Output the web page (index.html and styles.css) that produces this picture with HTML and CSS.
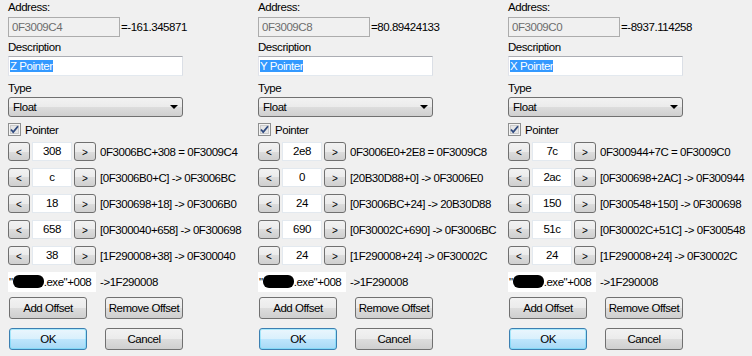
FILE: index.html
```html
<!DOCTYPE html>
<html lang="en">
<head>
  <meta charset="UTF-8" />
  <title>Pointer Editor</title>
  <link rel="stylesheet" href="styles.css">
</head>
<body>

  <div class="dialogs">

    <!-- Z pointer -->
    <div class="panel">
      <div class="label">Address:</div>
      <div class="field-row">
        <div class="addr-box">0F3009C4</div>
        <span class="addr-value">=-161.345871</span>
      </div>
      <div class="label label-desc">Description</div>
      <div class="text-box"><span class="selected">Z Pointer</span></div>
      <div class="label label-type">Type</div>
      <div class="select"><span>Float</span><span class="arrow"></span></div>
      <div class="check-row">
        <svg class="checkbox" width="13" height="13" viewBox="0 0 13 13"><rect x="0.5" y="0.5" width="12" height="12" fill="#f4f4f4" stroke="#8e8f8f"/><rect x="2.5" y="2.5" width="8" height="8" fill="#e6e6e6" stroke="#c9cacb"/><path d="M3 6.5 L5.2 9 L10 3.2" fill="none" stroke="#2f4a7f" stroke-width="1.8"/></svg>
        <span>Pointer</span>
      </div>
      <div class="offsets">
        <div class="offset-row"><button class="step">&lt;</button><div class="offset-input">308</div><button class="step">&gt;</button><span class="offset-text">0F3006BC+308 = 0F3009C4</span></div>
        <div class="offset-row"><button class="step">&lt;</button><div class="offset-input">c</div><button class="step">&gt;</button><span class="offset-text">[0F3006B0+C] -&gt; 0F3006BC</span></div>
        <div class="offset-row"><button class="step">&lt;</button><div class="offset-input">18</div><button class="step">&gt;</button><span class="offset-text">[0F300698+18] -&gt; 0F3006B0</span></div>
        <div class="offset-row"><button class="step">&lt;</button><div class="offset-input">658</div><button class="step">&gt;</button><span class="offset-text">[0F300040+658] -&gt; 0F300698</span></div>
        <div class="offset-row"><button class="step">&lt;</button><div class="offset-input">38</div><button class="step">&gt;</button><span class="offset-text">[1F290008+38] -&gt; 0F300040</span></div>
      </div>
      <div class="base-row">
        <div class="base-box">"<span class="redact"></span>.exe"+008</div>
        <span class="base-text">-&gt;1F290008</span>
      </div>
      <div class="btn-row">
        <button class="btn">Add Offset</button>
        <button class="btn">Remove Offset</button>
      </div>
      <div class="btn-row btn-row-last">
        <button class="btn btn-default">OK</button>
        <button class="btn">Cancel</button>
      </div>
    </div>

    <!-- Y pointer -->
    <div class="panel">
      <div class="label">Address:</div>
      <div class="field-row">
        <div class="addr-box">0F3009C8</div>
        <span class="addr-value">=80.89424133</span>
      </div>
      <div class="label label-desc">Description</div>
      <div class="text-box"><span class="selected">Y Pointer</span></div>
      <div class="label label-type">Type</div>
      <div class="select"><span>Float</span><span class="arrow"></span></div>
      <div class="check-row">
        <svg class="checkbox" width="13" height="13" viewBox="0 0 13 13"><rect x="0.5" y="0.5" width="12" height="12" fill="#f4f4f4" stroke="#8e8f8f"/><rect x="2.5" y="2.5" width="8" height="8" fill="#e6e6e6" stroke="#c9cacb"/><path d="M3 6.5 L5.2 9 L10 3.2" fill="none" stroke="#2f4a7f" stroke-width="1.8"/></svg>
        <span>Pointer</span>
      </div>
      <div class="offsets">
        <div class="offset-row"><button class="step">&lt;</button><div class="offset-input">2e8</div><button class="step">&gt;</button><span class="offset-text">0F3006E0+2E8 = 0F3009C8</span></div>
        <div class="offset-row"><button class="step">&lt;</button><div class="offset-input">0</div><button class="step">&gt;</button><span class="offset-text">[20B30D88+0] -&gt; 0F3006E0</span></div>
        <div class="offset-row"><button class="step">&lt;</button><div class="offset-input">24</div><button class="step">&gt;</button><span class="offset-text">[0F3006BC+24] -&gt; 20B30D88</span></div>
        <div class="offset-row"><button class="step">&lt;</button><div class="offset-input">690</div><button class="step">&gt;</button><span class="offset-text">[0F30002C+690] -&gt; 0F3006BC</span></div>
        <div class="offset-row"><button class="step">&lt;</button><div class="offset-input">24</div><button class="step">&gt;</button><span class="offset-text">[1F290008+24] -&gt; 0F30002C</span></div>
      </div>
      <div class="base-row">
        <div class="base-box">"<span class="redact"></span>.exe"+008</div>
        <span class="base-text">-&gt;1F290008</span>
      </div>
      <div class="btn-row">
        <button class="btn">Add Offset</button>
        <button class="btn">Remove Offset</button>
      </div>
      <div class="btn-row btn-row-last">
        <button class="btn btn-default">OK</button>
        <button class="btn">Cancel</button>
      </div>
    </div>

    <!-- X pointer -->
    <div class="panel">
      <div class="label">Address:</div>
      <div class="field-row">
        <div class="addr-box">0F3009C0</div>
        <span class="addr-value">=-8937.114258</span>
      </div>
      <div class="label label-desc">Description</div>
      <div class="text-box"><span class="selected">X Pointer</span></div>
      <div class="label label-type">Type</div>
      <div class="select"><span>Float</span><span class="arrow"></span></div>
      <div class="check-row">
        <svg class="checkbox" width="13" height="13" viewBox="0 0 13 13"><rect x="0.5" y="0.5" width="12" height="12" fill="#f4f4f4" stroke="#8e8f8f"/><rect x="2.5" y="2.5" width="8" height="8" fill="#e6e6e6" stroke="#c9cacb"/><path d="M3 6.5 L5.2 9 L10 3.2" fill="none" stroke="#2f4a7f" stroke-width="1.8"/></svg>
        <span>Pointer</span>
      </div>
      <div class="offsets">
        <div class="offset-row"><button class="step">&lt;</button><div class="offset-input">7c</div><button class="step">&gt;</button><span class="offset-text">0F300944+7C = 0F3009C0</span></div>
        <div class="offset-row"><button class="step">&lt;</button><div class="offset-input">2ac</div><button class="step">&gt;</button><span class="offset-text">[0F300698+2AC] -&gt; 0F300944</span></div>
        <div class="offset-row"><button class="step">&lt;</button><div class="offset-input">150</div><button class="step">&gt;</button><span class="offset-text">[0F300548+150] -&gt; 0F300698</span></div>
        <div class="offset-row"><button class="step">&lt;</button><div class="offset-input">51c</div><button class="step">&gt;</button><span class="offset-text">[0F30002C+51C] -&gt; 0F300548</span></div>
        <div class="offset-row"><button class="step">&lt;</button><div class="offset-input">24</div><button class="step">&gt;</button><span class="offset-text">[1F290008+24] -&gt; 0F30002C</span></div>
      </div>
      <div class="base-row">
        <div class="base-box">"<span class="redact"></span>.exe"+008</div>
        <span class="base-text">-&gt;1F290008</span>
      </div>
      <div class="btn-row">
        <button class="btn">Add Offset</button>
        <button class="btn">Remove Offset</button>
      </div>
      <div class="btn-row btn-row-last">
        <button class="btn btn-default">OK</button>
        <button class="btn">Cancel</button>
      </div>
    </div>

  </div>

</body>
</html>
```

FILE: styles.css
```css
body {
  margin: 0;
  background: #f0f0f0;
  font-family: "Liberation Sans", Arial, sans-serif;
  font-size: 11.5px;
  letter-spacing: -0.45px;
  color: #000;
}
.dialogs {
  display: flex;
}
.panel {
  width: 250px;
  padding-left: 8px;
  box-sizing: border-box;
  display: flex;
  flex-direction: column;
  align-items: flex-start;
}
.label {
  height: 15px;
  line-height: 15px;
}
.label-desc {
  margin-top: 3px;
}
.label-type {
  margin-top: 5px;
}
.field-row {
  display: flex;
  align-items: center;
  height: 20px;
  margin-top: 2px;
}
.addr-box {
  width: 112px;
  height: 20px;
  box-sizing: border-box;
  border: 1px solid #acacac;
  background: #f0f0f0;
  color: #6d6d6d;
  padding-left: 3px;
  line-height: 18px;
}
.addr-value {
  margin-left: 1px;
}
.text-box {
  margin-top: 1px;
  width: 175px;
  height: 20px;
  box-sizing: border-box;
  border: 1px solid;
  border-color: #abadb3 #dbdfe6 #e3e9ef #e2e3ea;
  background: #fff;
  padding-left: 1px;
  line-height: 18px;
}
.selected {
  background: #3399ff;
  color: #fff;
}
.select {
  margin-top: 1px;
  width: 175px;
  height: 20px;
  box-sizing: border-box;
  border: 1px solid #707070;
  border-radius: 3px;
  background: linear-gradient(#f2f2f2 0, #ebebeb 50%, #dddddd 50%, #cfcfcf 100%);
  display: flex;
  align-items: center;
  justify-content: space-between;
  padding: 0 4px 0 4px;
}
.arrow {
  width: 0;
  height: 0;
  border-left: 4px solid transparent;
  border-right: 4px solid transparent;
  border-top: 4px solid #000;
}
.check-row {
  margin-top: 6px;
  height: 13px;
  display: flex;
  align-items: center;
  gap: 4px;
}
.checkbox {
  display: block;
}
.offsets {
  margin-top: 6px;
  display: flex;
  flex-direction: column;
  gap: 7px;
}
.offset-row {
  display: flex;
  align-items: center;
  height: 19px;
}
.step {
  width: 22px;
  height: 19px;
  box-sizing: border-box;
  padding: 3px 0 0 0;
  border: 1px solid #707070;
  border-radius: 3px;
  background: linear-gradient(#f2f2f2 0, #ebebeb 50%, #dddddd 50%, #cfcfcf 100%);
  font-family: inherit;
  font-size: 10px;
  color: #000;
  line-height: 14px;
}
.offset-input {
  width: 40px;
  height: 19px;
  box-sizing: border-box;
  margin: 0 2px;
  border: 1px solid #e3e9ef;
  background: #fff;
  text-align: center;
  line-height: 16px;
}
.offset-text {
  margin-left: 4px;
  white-space: nowrap;
}
.base-row {
  margin-top: 7px;
  height: 20px;
  display: flex;
  align-items: center;
}
.base-box {
  width: 88px;
  height: 20px;
  box-sizing: border-box;
  background: #fff;
  padding-left: 1px;
  line-height: 20px;
  white-space: nowrap;
  overflow: hidden;
}
.redact {
  display: inline-block;
  width: 31px;
  height: 13px;
  background: #000;
  border-radius: 6px;
  vertical-align: -2px;
}
.base-text {
  margin-left: 4px;
}
.btn-row {
  display: flex;
  gap: 18px;
  margin-left: 1px;
  margin-top: 5px;
}
.btn-row-last {
  margin-top: 9px;
}
.btn {
  width: 78px;
  height: 22px;
  box-sizing: border-box;
  padding: 0;
  border: 1px solid #707070;
  border-radius: 3px;
  background: linear-gradient(#f2f2f2 0, #ebebeb 50%, #dddddd 50%, #cfcfcf 100%);
  font-family: inherit;
  font-size: 11.5px;
  letter-spacing: -0.45px;
  white-space: nowrap;
  color: #000;
}
.btn-default {
  border-color: #3c7fb1;
  box-shadow: inset 0 0 0 1px #48d8fb66;
  background: linear-gradient(#eaf6fd 0, #d9f0fc 50%, #bee6fd 50%, #a7d9f5 100%);
}
```
